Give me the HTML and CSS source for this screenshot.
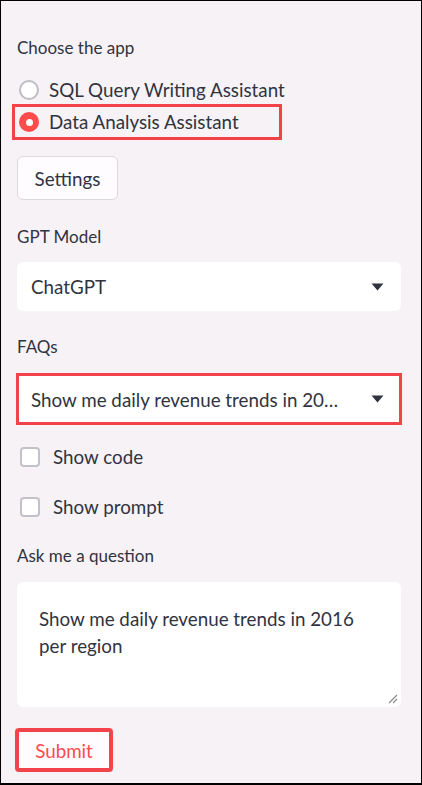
FILE: index.html
```html
<!DOCTYPE html>
<html>
<head>
<meta charset="utf-8">
<link rel="stylesheet" href="styles.css">
</head>
<body>
<div class="frame">
  <div class="label first">Choose the app</div>
  <div class="radios">
    <div class="radio-row">
      <span class="radio"></span>
      <span class="opt">SQL Query Writing Assistant</span>
    </div>
    <div class="radio-row hl-row">
      <span class="radio on"></span>
      <span class="opt">Data Analysis Assistant</span>
    </div>
  </div>
  <button class="btn settings">Settings</button>

  <div class="label gpt">GPT Model</div>
  <div class="select">
    <span class="sel-text">ChatGPT</span>
    <svg class="caret" width="13" height="8" viewBox="0 0 13 8"><path d="M0.5 0.5 H12.5 L6.5 7.5 Z" fill="#31333f"/></svg>
  </div>

  <div class="label faq">FAQs</div>
  <div class="select hl-select">
    <span class="sel-text">Show me daily revenue trends in 20…</span>
    <svg class="caret" width="13" height="8" viewBox="0 0 13 8"><path d="M0.5 0.5 H12.5 L6.5 7.5 Z" fill="#31333f"/></svg>
  </div>

  <div class="checks">
    <div class="check-row"><span class="box"></span><span class="opt">Show code</span></div>
    <div class="check-row"><span class="box"></span><span class="opt">Show prompt</span></div>
  </div>

  <div class="label ask">Ask me a question</div>
  <div class="textarea">
    <div class="ta-text">Show me daily revenue trends in 2016 per region</div>
    <svg class="grip" width="10" height="10" viewBox="0 0 10 10"><path d="M9 1 L1 9 M9 5 L5 9" stroke="#8a8a90" stroke-width="1.2" fill="none"/></svg>
  </div>

  <button class="btn submit">Submit</button>
</div>
</body>
</html>
```

FILE: styles.css
```css
* { box-sizing: border-box; }
html, body { margin: 0; padding: 0; }
body {
  font-family: Lato, "Noto Sans", sans-serif;
  color: #31333f;
  background: #ffffff;
}
.frame {
  width: 422px;
  height: 785px;
  border: 1px solid #000;
  border-bottom-width: 2px;
  background: #f6f2f6;
  padding: 36px 20px 0 16px;
  display: flex;
  flex-direction: column;
  align-items: flex-start;
}
.label {
  font-size: 17px;
  line-height: 22px;
  color: #31333f;
}
.radios { margin-top: 15px; display: flex; flex-direction: column; }
.radio-row {
  height: 32px;
  display: flex;
  align-items: center;
  gap: 10px;
  padding-left: 2px;
}
.hl-row {
  margin-left: -3px;
  padding-left: 5px;
  width: 266px;
  outline: 3px solid #f2424a;
  outline-offset: -1px;
}
.opt { font-size: 18.8px; line-height: 22px; }
.radio {
  width: 20px; height: 20px;
  border-radius: 50%;
  border: 2px solid #bfbcc3;
  background: #fff;
  flex: none;
  display: flex; align-items: center; justify-content: center;
}
.radio.on {
  border: none;
  background: #ff4b4b;
}
.radio.on::after {
  content: "";
  width: 7px; height: 7px;
  border-radius: 50%;
  background: #fff;
}
.btn {
  font-family: Lato, "Noto Sans", sans-serif;
  font-size: 18.8px;
  background: #fefcfe;
  border: 1px solid #dcd8dd;
  border-radius: 6px;
  color: #31333f;
  padding: 0 16px;
  height: 44px;
}
.settings { margin-top: 18px; width: 101px; }
.gpt { margin-top: 26px; }
.faq { margin-top: 25px; }
.select {
  width: 384px;
  height: 49px;
  background: #fff;
  border-radius: 6px;
  display: flex;
  align-items: center;
  justify-content: space-between;
  padding: 0 17px 0 14px;
  margin-top: 14px;
  font-size: 18.8px;
}
.hl-select {
  margin-top: 16px;
  height: 50px;
  border-radius: 0;
  outline: 3px solid #f2424a;
  outline-offset: -2px;
}
.caret { flex: none; }
.checks { margin-top: 13px; display: flex; flex-direction: column; gap: 10px; }
.check-row {
  height: 40px;
  display: flex;
  align-items: center;
  gap: 13px;
  padding-left: 3px;
}
.box {
  width: 20px; height: 20px;
  border: 2px solid #c4c1c8;
  border-radius: 4px;
  background: #fff;
  flex: none;
}
.ask { margin-top: 18px; }
.textarea {
  margin-top: 15px;
  width: 384px;
  height: 125px;
  background: #fff;
  border-radius: 6px;
  position: relative;
  padding: 23px 30px 0 22px;
}
.ta-text { font-size: 18.8px; line-height: 27px; }
.grip { position: absolute; right: 3px; bottom: 3px; }
.submit {
  margin-top: 23px;
  width: 94px;
  height: 40px;
  color: #ff4b4b;
  border-radius: 2px;
  outline: 4px solid #f2424a;
  outline-offset: -2px;
}
```
